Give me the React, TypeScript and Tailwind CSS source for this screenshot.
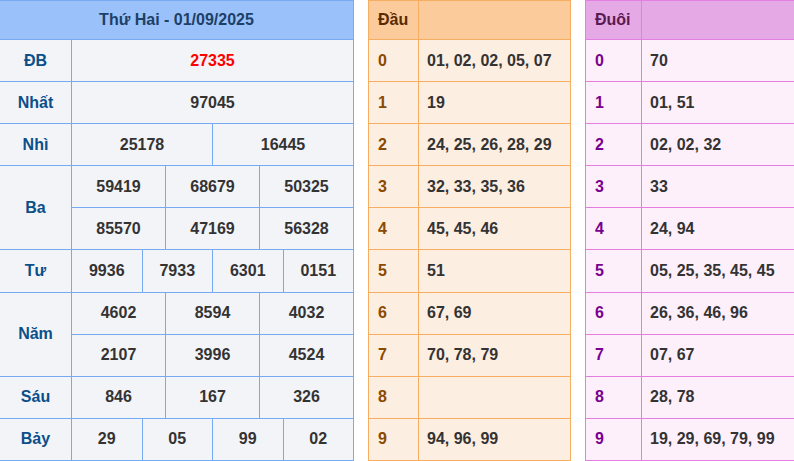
export default function App() {
  const b = "border border-[#76aaf2]";
  const lab = `${b} text-[#0b4f8a] w-[72px]`;
  const cell = `${b} text-[#333]`;
  const dau = [["0","01, 02, 02, 05, 07"],["1","19"],["2","24, 25, 26, 28, 29"],["3","32, 33, 35, 36"],["4","45, 45, 46"],["5","51"],["6","67, 69"],["7","70, 78, 79"],["8",""],["9","94, 96, 99"]];
  const duoi = [["0","70"],["1","01, 51"],["2","02, 02, 32"],["3","33"],["4","24, 94"],["5","05, 25, 35, 45, 45"],["6","26, 36, 46, 96"],["7","07, 67"],["8","28, 78"],["9","19, 29, 69, 79, 99"]];
  const row = "h-[42px]";
  return (
    <div className="w-[794px] h-[461px] bg-white flex overflow-hidden font-[family-name:Liberation_Sans,Arial,sans-serif] font-bold text-[16px]">
      <table className="w-[355px] border-collapse table-fixed text-center bg-[#f3f4f8] -ml-[1px] shrink-0">
        <colgroup><col className="w-[72px]" />{Array.from({length:12}).map((_,i)=><col key={i} />)}</colgroup>
        <tbody>
          <tr className="h-[39px]"><td colSpan={13} className={`${b} bg-[#9bc1fb] text-[#1c4066]`}>Thứ Hai - 01/09/2025</td></tr>
          <tr className={row}><td className={lab}>ĐB</td><td colSpan={12} className={`${b} text-[#ff0000]`}>27335</td></tr>
          <tr className={row}><td className={lab}>Nhất</td><td colSpan={12} className={cell}>97045</td></tr>
          <tr className={row}><td className={lab}>Nhì</td><td colSpan={6} className={cell}>25178</td><td colSpan={6} className={cell}>16445</td></tr>
          <tr className={row}><td rowSpan={2} className={lab}>Ba</td>{["59419","68679","50325"].map(v=><td key={v} colSpan={4} className={cell}>{v}</td>)}</tr>
          <tr className={row}>{["85570","47169","56328"].map(v=><td key={v} colSpan={4} className={cell}>{v}</td>)}</tr>
          <tr className={row}><td className={lab}>Tư</td>{["9936","7933","6301","0151"].map(v=><td key={v} colSpan={3} className={cell}>{v}</td>)}</tr>
          <tr className={row}><td rowSpan={2} className={lab}>Năm</td>{["4602","8594","4032"].map(v=><td key={v} colSpan={4} className={cell}>{v}</td>)}</tr>
          <tr className={row}>{["2107","3996","4524"].map(v=><td key={v} colSpan={4} className={cell}>{v}</td>)}</tr>
          <tr className={row}><td className={lab}>Sáu</td>{["846","167","326"].map(v=><td key={v} colSpan={4} className={cell}>{v}</td>)}</tr>
          <tr className={row}><td className={lab}>Bảy</td>{["29","05","99","02"].map(v=><td key={v} colSpan={3} className={cell}>{v}</td>)}</tr>
        </tbody>
      </table>
      <table className="ml-[14px] w-[203px] border-collapse table-fixed bg-[#fdeee2] shrink-0">
        <colgroup><col className="w-[50px]" /><col /></colgroup>
        <tbody>
          <tr className="h-[39px] bg-[#fbcb9c]"><td className="border border-[#f8ae62] pl-[9px] text-[#5a2a00]">Đầu</td><td className="border border-[#f8ae62]"></td></tr>
          {dau.map(([k,v])=><tr key={k} className={row}><td className="border border-[#f8ae62] pl-[9px] text-[#8b4a00]">{k}</td><td className="border border-[#f8ae62] pl-[8px] text-[#333]">{v}</td></tr>)}
        </tbody>
      </table>
      <table className="ml-[14px] w-[214px] border-collapse table-fixed bg-[#fdf0fb] shrink-0">
        <colgroup><col className="w-[56px]" /><col /></colgroup>
        <tbody>
          <tr className="h-[39px] bg-[#e5aae6]"><td className="border border-[#e47fdf] pl-[9px] text-[#5a1a50]">Đuôi</td><td className="border border-[#e47fdf]"></td></tr>
          {duoi.map(([k,v])=><tr key={k} className={row}><td className="border border-[#e47fdf] pl-[9px] text-[#7a0090]">{k}</td><td className="border border-[#e47fdf] pl-[8px] text-[#333]">{v}</td></tr>)}
        </tbody>
      </table>
    </div>
  );
}
